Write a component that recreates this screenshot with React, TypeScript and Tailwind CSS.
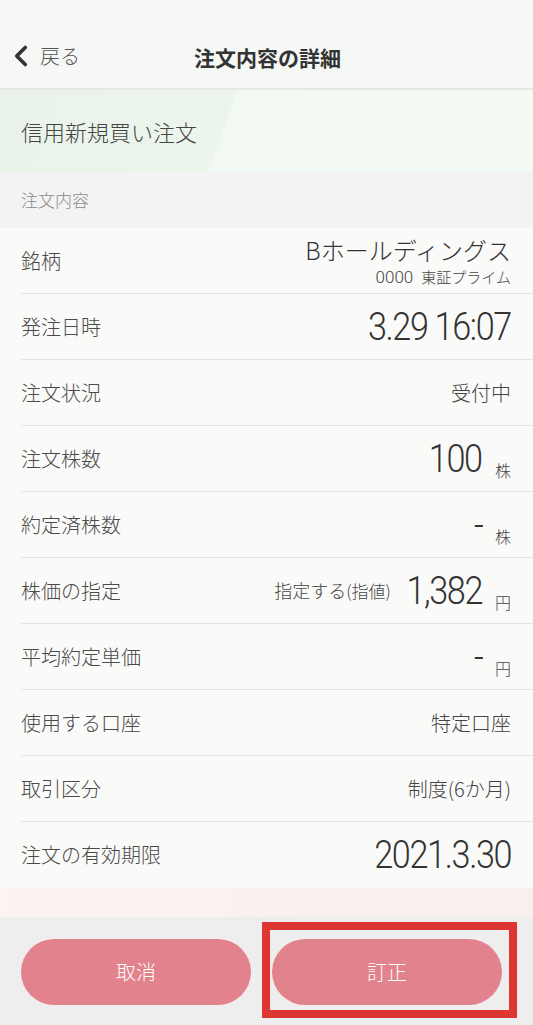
import { ChevronLeft } from 'lucide-react';

const jp = { fontFamily: '"Noto Sans CJK JP", "Noto Sans", sans-serif' };
const num = { fontFamily: 'Roboto, "Noto Sans CJK JP", sans-serif' };

function Row({ label, children, last }: { label: string; children: React.ReactNode; last?: boolean }) {
  return (
    <div className="pl-[21px]">
      <div className={`flex h-[66px] items-center justify-between pr-[22px] ${last ? '' : 'border-b border-[#e3e3e3]'}`}>
        <span className="text-[20px] font-light text-[#4a4a4a]">{label}</span>
        <div className="flex items-center">{children}</div>
      </div>
    </div>
  );
}

function Big({ v, unit }: { v: string; unit?: string }) {
  return (
    <div className="flex items-end">
      <span style={num} className="inline-block origin-right scale-x-[0.9] text-[38px] font-light leading-none tracking-[-1.5px] text-[#333]">
        {v}
      </span>
      {unit && <span className="ml-[13px] mb-[-4px] text-[16px] font-light text-[#444]">{unit}</span>}
    </div>
  );
}

export default function App() {
  return (
    <div style={jp} className="relative h-[1025px] w-[533px] overflow-hidden bg-[#f9f9f8]">
      {/* Header */}
      <div className="relative flex h-[90px] items-end border-b-2 border-[#e4e7e4] bg-[#f5f8f5] pb-[15px]">
        <div className="flex items-center pl-[4px] text-[#333]">
          <ChevronLeft className="h-[34px] w-[34px]" strokeWidth={2.6} />
          <span className="ml-[2px] text-[20px] font-light text-[#555]">戻る</span>
        </div>
        <div className="absolute inset-x-0 bottom-[15px] pl-[2px] text-center text-[21px] font-bold text-[#333]">注文内容の詳細</div>
      </div>

      {/* Title banner */}
      <div className="flex h-[82px] items-center bg-[linear-gradient(110deg,#e9f3ea_0%,#ebf5ec_42%,#f2f9f2_42.5%,#f4faf4_100%)] pl-[21px]">
        <span className="text-[22px] font-light text-[#454545]">信用新規買い注文</span>
      </div>

      {/* Section */}
      <div className="flex h-[56px] items-center bg-[#f3f3f3] pl-[21px]">
        <span className="text-[17px] font-light text-[#8a8a8a]">注文内容</span>
      </div>

      <div className="bg-[#fafaf9]">
        <Row label="銘柄">
          <div className="flex flex-col items-end">
            <span className="text-[24px] font-light leading-[32px] text-[#333]">Bホールディングス</span>
            <div className="flex items-center text-[15px] font-light leading-[22px] text-[#444]">
              <span style={num} className="mr-[8px] text-[17px] font-light leading-[22px]">0000</span>
              <span>東証プライム</span>
            </div>
          </div>
        </Row>
        <Row label="発注日時">
          <Big v="3.29 16:07" />
        </Row>
        <Row label="注文状況">
          <span className="text-[20px] font-light text-[#444]">受付中</span>
        </Row>
        <Row label="注文株数">
          <Big v="100" unit="株" />
        </Row>
        <Row label="約定済株数">
          <Big v="-" unit="株" />
        </Row>
        <Row label="株価の指定">
          <span className="mr-[7px] text-[18px] font-light text-[#444]">
            指定する<span className="text-[17px]">(指値)</span>
          </span>
          <Big v="1,382" unit="円" />
        </Row>
        <Row label="平均約定単価">
          <Big v="-" unit="円" />
        </Row>
        <Row label="使用する口座">
          <span className="text-[20px] font-light text-[#444]">特定口座</span>
        </Row>
        <Row label="取引区分">
          <span className="text-[20px] font-light text-[#444]">制度(6か月)</span>
        </Row>
        <Row label="注文の有効期限" last>
          <Big v="2021.3.30" />
        </Row>
      </div>

      <div className="h-[29px] bg-[linear-gradient(90deg,#fbf4f3,#f8efee)]" />

      {/* Footer */}
      <div className="flex h-[109px] gap-[21px] bg-[#eeeeee] pl-[21px] pr-[31px] pt-[22px]">
        <button className="h-[66px] flex-1 rounded-full bg-[#e2828c] text-[20px] font-light text-white">取消</button>
        <button className="h-[66px] flex-1 rounded-full bg-[#e2828c] text-[20px] font-light text-white">訂正</button>
      </div>

      {/* Highlight */}
      <div className="absolute left-[262px] top-[922px] h-[96px] w-[255px] border-[8px] border-[#e03632]" />
    </div>
  );
}
